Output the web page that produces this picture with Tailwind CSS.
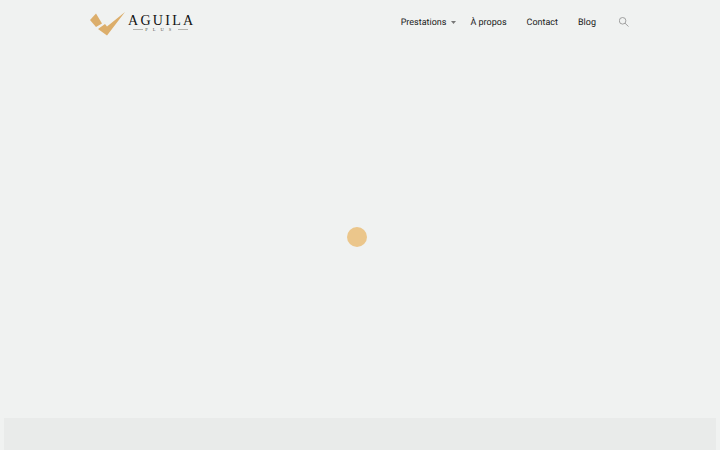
<!DOCTYPE html>
<html lang="fr">
<head>
  <meta charset="UTF-8" />
  <title>Aguila Plus</title>
  <script src="https://cdn.jsdelivr.net/npm/@tailwindcss/browser@4"></script>
</head>
<body class="bg-[#f0f2f1] overflow-hidden">
  <div class="h-[450px] flex flex-col">
    <!-- header -->
    <header class="h-[44px] flex items-center justify-between pl-[90px] pr-[91px]">
      <a class="flex items-center gap-[2px] mt-[2px]">
        <svg class="w-[36px] h-[26px]" viewBox="0 0 36 26">
          <path d="M0 10 L6 3.5 L12 13.5 L6 17 Z" fill="#dcae6b"/>
          <path d="M8 19 L15 14 L17 16.5 L35 2 L17 25.5 Z" fill="#dcae6b"/>
        </svg>
        <div class="flex flex-col items-center">
          <span class="font-['Liberation_Serif',serif] text-[14px] leading-[13px] tracking-[2.3px] mr-[-2px] text-[#111]">AGUILA</span>
          <div class="flex items-center gap-[2px] h-[6px]">
            <span class="w-[10px] h-px bg-[#b5b5b0]"></span>
            <span class="font-['Liberation_Serif',serif] text-[4.5px] leading-[6px] tracking-[5px] text-[#55554f]">PLUS</span>
            <span class="w-[10px] h-px bg-[#b5b5b0]"></span>
          </div>
        </div>
      </a>
      <nav class="flex items-center font-['Roboto',sans-serif] text-[9px] text-[#222] [text-rendering:geometricPrecision]">
        <a class="pt-[3px]">Prestations</a>
        <svg class="w-[5px] h-[3px] ml-[5px]" viewBox="0 0 5 3"><path d="M0 0 H5 L2.5 3 Z" fill="#777"/></svg>
        <a class="ml-[14px] pt-[3px]">À propos</a>
        <a class="ml-[20px] pt-[3px]">Contact</a>
        <a class="ml-[20px] pt-[3px]">Blog</a>
        <svg class="w-[10px] h-[10px] ml-[23px]" viewBox="0 0 10 10" fill="none" stroke="#8d8d8d" stroke-width="0.8">
          <circle cx="3.6" cy="3.8" r="3.3"/>
          <path d="M6 6.2 L9.5 9.5"/>
        </svg>
      </nav>
    </header>
    <!-- loader -->
    <main class="flex-1 flex items-center justify-center pr-[7px] pt-[12px]">
      <div class="w-5 h-5 rounded-full bg-[#ebc68b]"></div>
    </main>
    <!-- bottom panel -->
    <section class="h-[32px] mx-1 bg-[#e9ebea]"></section>
  </div>
</body>
</html>
